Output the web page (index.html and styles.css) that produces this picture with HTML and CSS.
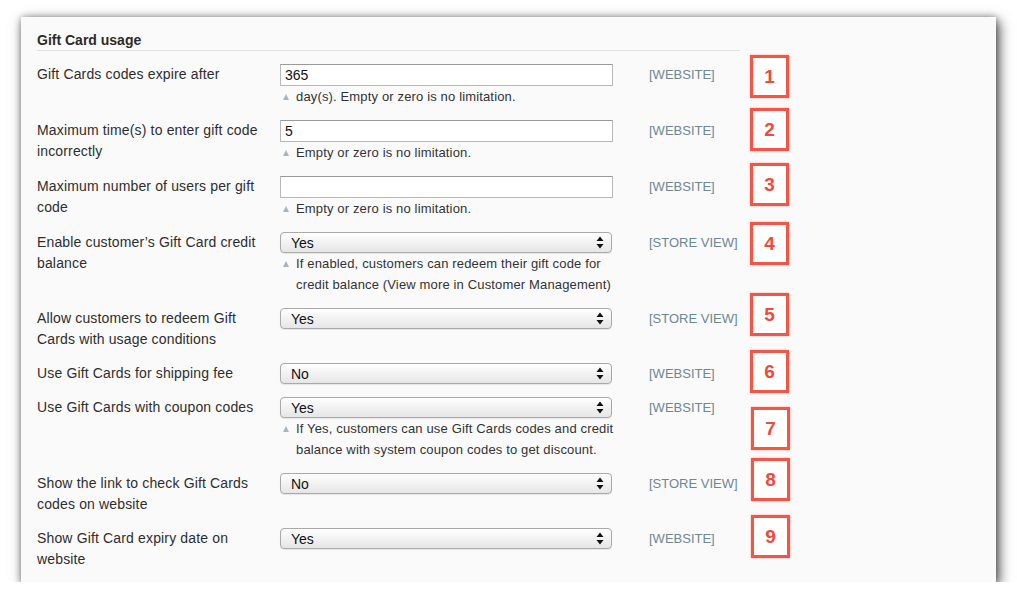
FILE: index.html
```html
<!DOCTYPE html>
<html>
<head>
<meta charset="utf-8">
<link rel="stylesheet" href="styles.css">
</head>
<body>
<div class="panel">
  <div class="section">
    <h2 class="section-title">Gift Card usage</h2>
    <div class="rows">
      <div class="row">
        <div class="label">Gift Cards codes expire after</div>
        <div class="field">
          <div class="input">365</div>
          <div class="hint"><span class="tri"></span><span class="hint-text">day(s). Empty or zero is no limitation.</span></div>
        </div>
        <div class="scope">[WEBSITE]</div>
      </div>
      <div class="row">
        <div class="label">Maximum time(s) to enter gift code incorrectly</div>
        <div class="field">
          <div class="input">5</div>
          <div class="hint"><span class="tri"></span><span class="hint-text">Empty or zero is no limitation.</span></div>
        </div>
        <div class="scope">[WEBSITE]</div>
      </div>
      <div class="row">
        <div class="label">Maximum number of users per gift code</div>
        <div class="field">
          <div class="input"></div>
          <div class="hint"><span class="tri"></span><span class="hint-text">Empty or zero is no limitation.</span></div>
        </div>
        <div class="scope">[WEBSITE]</div>
      </div>
      <div class="row">
        <div class="label">Enable customer’s Gift Card credit balance</div>
        <div class="field">
          <div class="select"><span>Yes</span><svg class="arrows" width="8" height="13" viewBox="0 0 8 13"><path d="M4 0.5 L7.5 5 L0.5 5 Z M0.5 8 L7.5 8 L4 12.5 Z" fill="#111"/></svg></div>
          <div class="hint"><span class="tri"></span><span class="hint-text">If enabled, customers can redeem their gift code for credit balance (View more in Customer Management)</span></div>
        </div>
        <div class="scope">[STORE VIEW]</div>
      </div>
      <div class="row">
        <div class="label">Allow customers to redeem Gift Cards with usage conditions</div>
        <div class="field">
          <div class="select"><span>Yes</span><svg class="arrows" width="8" height="13" viewBox="0 0 8 13"><path d="M4 0.5 L7.5 5 L0.5 5 Z M0.5 8 L7.5 8 L4 12.5 Z" fill="#111"/></svg></div>
        </div>
        <div class="scope">[STORE VIEW]</div>
      </div>
      <div class="row">
        <div class="label">Use Gift Cards for shipping fee</div>
        <div class="field">
          <div class="select"><span>No</span><svg class="arrows" width="8" height="13" viewBox="0 0 8 13"><path d="M4 0.5 L7.5 5 L0.5 5 Z M0.5 8 L7.5 8 L4 12.5 Z" fill="#111"/></svg></div>
        </div>
        <div class="scope">[WEBSITE]</div>
      </div>
      <div class="row">
        <div class="label">Use Gift Cards with coupon codes</div>
        <div class="field">
          <div class="select"><span>Yes</span><svg class="arrows" width="8" height="13" viewBox="0 0 8 13"><path d="M4 0.5 L7.5 5 L0.5 5 Z M0.5 8 L7.5 8 L4 12.5 Z" fill="#111"/></svg></div>
          <div class="hint"><span class="tri"></span><span class="hint-text">If Yes, customers can use Gift Cards codes and credit balance with system coupon codes to get discount.</span></div>
        </div>
        <div class="scope">[WEBSITE]</div>
      </div>
      <div class="row">
        <div class="label">Show the link to check Gift Cards codes on website</div>
        <div class="field">
          <div class="select"><span>No</span><svg class="arrows" width="8" height="13" viewBox="0 0 8 13"><path d="M4 0.5 L7.5 5 L0.5 5 Z M0.5 8 L7.5 8 L4 12.5 Z" fill="#111"/></svg></div>
        </div>
        <div class="scope">[STORE VIEW]</div>
      </div>
      <div class="row">
        <div class="label">Show Gift Card expiry date on website</div>
        <div class="field">
          <div class="select"><span>Yes</span><svg class="arrows" width="8" height="13" viewBox="0 0 8 13"><path d="M4 0.5 L7.5 5 L0.5 5 Z M0.5 8 L7.5 8 L4 12.5 Z" fill="#111"/></svg></div>
        </div>
        <div class="scope">[WEBSITE]</div>
      </div>
    </div>
  </div>

  <div class="mark mark-1">1</div>
  <div class="mark mark-2">2</div>
  <div class="mark mark-3">3</div>
  <div class="mark mark-4">4</div>
  <div class="mark mark-5">5</div>
  <div class="mark mark-6">6</div>
  <div class="mark mark-7">7</div>
  <div class="mark mark-8">8</div>
  <div class="mark mark-9">9</div>
</div>
</body>
</html>
```
FILE: styles.css
```css
html, body {
  margin: 0;
  padding: 0;
  background: #ffffff;
}

body {
  font-family: "Liberation Sans", Arial, Helvetica, sans-serif;
  color: #2e2e2e;
}

.panel {
  position: relative;
  box-sizing: border-box;
  margin: 17px 0 0 21px;
  width: 975px;
  height: 565px;
  padding: 14px 16px 0 16px;
  background: #fafafa;
  box-shadow: 3px 4px 12px rgba(0, 0, 0, 0.7), 0 0 6px rgba(0, 0, 0, 0.3);
}

.section {
  width: 703px;
}

.section-title {
  margin: 0;
  padding: 0 0 1px 0;
  font-size: 14px;
  line-height: 18px;
  font-weight: bold;
  color: #2b2b2b;
  border-bottom: 1px solid #e2e2e2;
}

.rows {
  padding-top: 13px;
  display: flex;
  flex-direction: column;
  gap: 13px;
}

.row {
  display: grid;
  grid-template-columns: 243px 333px 127px;
  align-items: start;
}

.label {
  font-size: 14px;
  line-height: 21px;
  width: 232px;
  letter-spacing: 0.15px;
}

.field {
  display: flex;
  flex-direction: column;
}

.input {
  box-sizing: border-box;
  height: 22px;
  border: 1px solid #b9b9b9;
  border-top-color: #9a9a9a;
  background: #ffffff;
  font-size: 14px;
  line-height: 20px;
  padding-left: 4px;
  color: #111;
}

.select {
  box-sizing: border-box;
  height: 21px;
  width: 332px;
  border: 1px solid #a9a9a9;
  border-radius: 4px;
  background: linear-gradient(#ffffff, #f2f2f2 50%, #e6e6e6);
  box-shadow: 0 1px 1px rgba(0, 0, 0, 0.08);
  display: flex;
  align-items: center;
  justify-content: space-between;
  padding: 0 7px 0 10px;
  font-size: 14px;
  color: #111;
}

.arrows {
  display: block;
}

.hint {
  display: flex;
  align-items: flex-start;
  font-size: 13px;
  line-height: 21px;
  color: #333;
  letter-spacing: 0.15px;
  margin-right: -10px;
}

.tri {
  flex: none;
  width: 0;
  height: 0;
  margin: 8px 7px 0 3px;
  border-left: 3.5px solid transparent;
  border-right: 3.5px solid transparent;
  border-bottom: 6px solid #a9b5bd;
}

.hint-text {
  flex: 1;
}

.scope {
  font-size: 13px;
  line-height: 21px;
  color: #6d8794;
  white-space: nowrap;
  padding-left: 36px;
}

.mark {
  position: absolute;
  box-sizing: border-box;
  left: 729px;
  width: 39px;
  height: 43px;
  border: 3px solid #f35645;
  background: #ffffff;
  box-shadow: 0 0 2px rgba(243, 86, 69, 0.5);
  display: flex;
  align-items: center;
  justify-content: center;
  font-size: 19px;
  font-weight: bold;
  color: #f3493a;
}

.mark-1 { top: 38px; }
.mark-2 { top: 91px; }
.mark-3 { top: 146px; }
.mark-4 { top: 205px; }
.mark-5 { top: 276px; }
.mark-6 { top: 333px; }
.mark-7 { top: 390px; left: 730px; }
.mark-8 { top: 441px; left: 730px; }
.mark-9 { top: 498px; left: 730px; }
```
